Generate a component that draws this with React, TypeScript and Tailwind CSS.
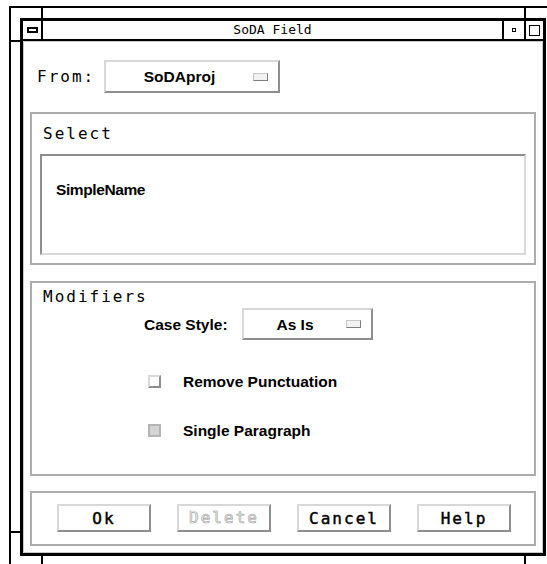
import type { ReactNode } from "react";

const mono = "font-['DejaVu_Sans_Mono',monospace] text-[16px] leading-[19px] tracking-[2px] text-black";
const sans = "font-['Liberation_Sans',Arial,sans-serif] text-[15.5px] leading-[17px] font-bold text-black";
const raised =
  "border-2 border-t-[#d8d8d8] border-l-[#d8d8d8] border-r-[#8e8e8e] border-b-[#8e8e8e] bg-white";
const etched = "border-2 border-[#acacac]";

function OptionMenu({ value, className }: { value: string; className: string }) {
  return (
    <div className={`flex items-center ${raised} ${className}`}>
      <span className={`flex-1 text-center ${sans}`}>{value}</span>
      <span className="mr-[10px] h-[8px] w-[15px] border border-t-[#c8c8c8] border-l-[#c8c8c8] border-r-[#7e7e7e] border-b-[#7e7e7e] bg-[#f2f2f2]" />
    </div>
  );
}

function Toggle({ label, set }: { label: string; set?: boolean }) {
  return (
    <div className="flex h-[14px] items-center">
      <span
        className={`ml-[116px] h-[13px] w-[13px] border-2 ${
          set
            ? "border-[#b4b4b4] bg-[#d4d4d4]"
            : "border-t-[#d8d8d8] border-l-[#d8d8d8] border-r-[#8e8e8e] border-b-[#8e8e8e] bg-white"
        }`}
      />
      <span className={`ml-[22px] ${sans}`}>{label}</span>
    </div>
  );
}

function PushButton({ children, disabled }: { children: ReactNode; disabled?: boolean }) {
  return (
    <button
      className={`flex h-[28px] w-[94px] items-center justify-center ${raised} ${
        disabled
          ? "font-['DejaVu_Sans_Mono',monospace] text-[16px] tracking-[2px] text-transparent [-webkit-text-stroke:0.7px_#a4a4a4]"
          : `${mono} [-webkit-text-stroke:0.45px_black]`
      }`}
    >
      {children}
    </button>
  );
}

export default function App() {
  return (
    <div className="relative h-[564px] w-[547px] overflow-hidden bg-white">
      {/* window manager frame */}
      <div className="ml-[9px] mt-[6px] h-[600px] w-[600px] border-l-2 border-t-2 border-black pl-[9px] pt-[10px]">
        <div className="flex h-[538px] w-[526px] flex-col border-[3px] border-black">
          {/* title bar */}
          <div className="flex h-[20px] border-b-2 border-black">
            <div className="flex w-[20px] items-center justify-center border-r-2 border-black">
              <span className="h-[6px] w-[11px] border-2 border-black" />
            </div>
            <div className="flex-1 text-center font-['DejaVu_Sans_Mono',monospace] text-[13px] leading-[18px] text-black">
              SoDA Field
            </div>
            <div className="flex w-[22px] items-center justify-center border-l-2 border-black">
              <span className="h-[4px] w-[4px] border border-black" />
            </div>
            <div className="flex w-[19px] items-center justify-center border-l-2 border-black">
              <span className="h-[11px] w-[11px] border-[1.5px] border-black" />
            </div>
          </div>

          {/* dialog body */}
          <div className="flex-1 shadow-[inset_1px_1px_0_#c8c8c8,inset_-1px_-1px_0_#c8c8c8]">
            <div className="mt-[19px] flex items-center pl-[14px]">
              <span className={`w-[67px] ${mono}`}>From:</span>
              <OptionMenu value="SoDAproj" className="h-[33px] w-[176px]" />
            </div>

            <div className={`mx-[7px] mt-[19px] px-[8px] pb-[8px] pt-[10px] ${etched}`}>
              <div className={`pl-[3px] ${mono}`}>Select</div>
              <div className="mt-[11px] h-[101px] border-2 border-t-[#8e8e8e] border-l-[#8e8e8e] border-r-[#d8d8d8] border-b-[#d8d8d8] pl-[14px] pt-[21px]">
                <span className={`${sans} tracking-[-0.4px]`}>SimpleName</span>
              </div>
            </div>

            <div className={`mx-[7px] mt-[16px] pb-[37px] pt-[4px] ${etched}`}>
              <div className={`pl-[11px] ${mono}`}>Modifiers</div>
              <div className="mt-[2px] flex items-center pl-[112px]">
                <span className={`w-[98px] ${sans}`}>Case Style:</span>
                <OptionMenu value="As Is" className="h-[32px] w-[131px]" />
              </div>
              <div className="mt-[34px] flex flex-col gap-[35px]">
                <Toggle label="Remove Punctuation" />
                <Toggle label="Single Paragraph" set />
              </div>
            </div>

            <div className={`mx-[7px] mt-[15px] flex gap-[26px] pb-[12px] pl-[25px] pt-[11px] ${etched}`}>
              <PushButton>Ok</PushButton>
              <PushButton disabled>Delete</PushButton>
              <PushButton>Cancel</PushButton>
              <PushButton>Help</PushButton>
            </div>
          </div>
        </div>
      </div>

      {/* resize corner marks */}
      <span className="absolute left-[41px] top-[6px] h-[12px] w-[2px] bg-black" />
      <span className="absolute left-[524px] top-[6px] h-[12px] w-[2px] bg-black" />
      <span className="absolute left-[9px] top-[40px] h-[2px] w-[11px] bg-black" />
      <span className="absolute left-[9px] top-[531px] h-[2px] w-[11px] bg-black" />
      <span className="absolute left-[41px] top-[556px] h-[8px] w-[2px] bg-black" />
      <span className="absolute left-[524px] top-[556px] h-[8px] w-[2px] bg-black" />
    </div>
  );
}
